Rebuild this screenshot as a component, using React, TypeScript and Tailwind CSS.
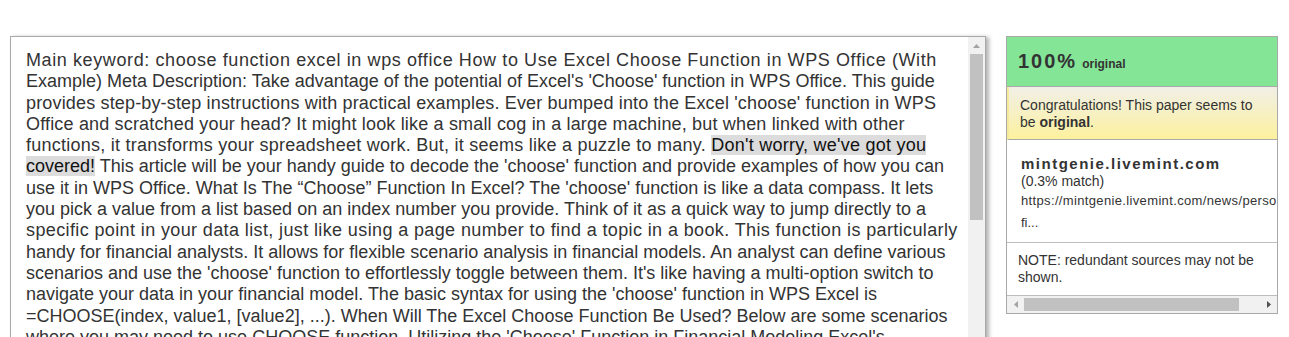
import React from 'react';

type Line = { text: React.ReactNode; cls: string };

const lines: Line[] = [
  { text: "Main keyword: choose function excel in wps office How to Use Excel Choose Function in WPS Office (With", cls: 'tracking-[0.6px]' },
  { text: "Example) Meta Description: Take advantage of the potential of Excel's 'Choose' function in WPS Office. This guide", cls: 'tracking-normal' },
  { text: "provides step-by-step instructions with practical examples. Ever bumped into the Excel 'choose' function in WPS", cls: 'tracking-[0.16px]' },
  { text: "Office and scratched your head? It might look like a small cog in a large machine, but when linked with other", cls: 'tracking-[0.17px]' },
  {
    text: (
      <>
        functions, it transforms your spreadsheet work. But, it seems like a puzzle to many.{' '}
        <span className="bg-[#dcdcdc] text-[#111]">Don't worry, we've got you</span>
      </>
    ),
    cls: 'tracking-[0.25px]',
  },
  {
    text: (
      <>
        <span className="bg-[#dcdcdc] text-[#111]">covered!</span> This article will be your handy guide to decode the
        'choose' function and provide examples of how you can
      </>
    ),
    cls: 'tracking-normal',
  },
  { text: "use it in WPS Office. What Is The \u201cChoose\u201d Function In Excel? The 'choose' function is like a data compass. It lets", cls: 'tracking-normal' },
  { text: "you pick a value from a list based on an index number you provide. Think of it as a quick way to jump directly to a", cls: 'tracking-normal' },
  { text: "specific point in your data list, just like using a page number to find a topic in a book. This function is particularly", cls: 'tracking-[0.38px]' },
  { text: "handy for financial analysts. It allows for flexible scenario analysis in financial models. An analyst can define various", cls: 'tracking-normal' },
  { text: "scenarios and use the 'choose' function to effortlessly toggle between them. It's like having a multi-option switch to", cls: 'tracking-normal' },
  { text: "navigate your data in your financial model. The basic syntax for using the 'choose' function in WPS Excel is", cls: 'tracking-normal' },
  { text: "=CHOOSE(index, value1, [value2], ...). When Will The Excel Choose Function Be Used? Below are some scenarios", cls: 'tracking-normal' },
  { text: "where you may need to use CHOOSE function. Utilizing the 'Choose' Function in Financial Modeling Excel's", cls: 'tracking-normal' },
];

const ArrowUp = () => (
  <svg width="7" height="4" viewBox="0 0 7 4">
    <path d="M0 4 L3.5 0 L7 4 Z" fill="#a3a3a3" />
  </svg>
);

export default function App() {
  return (
    <div className="w-[1289px] h-[337px] bg-white overflow-hidden font-['Liberation_Sans',Arial,sans-serif]">
      <div className="flex items-start pt-[36px] pl-[10px] gap-[20px]">
        {/* text box */}
        <div className="w-[976px] h-[330px] flex border border-[#a9a9a9] bg-white shadow-[3px_1px_4px_rgba(0,0,0,0.3)]">
          <div className="flex-1 overflow-hidden pl-[15px] pr-[4px] pt-[13px]">
            <div className="text-[18px] leading-[21.3px] text-[#333]">
              {lines.map((l, i) => (
                <div key={i} className={`whitespace-nowrap ${l.cls}`}>
                  {l.text}
                </div>
              ))}
            </div>
          </div>
          <div className="w-[17px] bg-[#f1f1f1] flex flex-col items-center">
            <div className="h-[17px] flex items-center justify-center">
              <ArrowUp />
            </div>
            <div className="w-[13px] h-[166px] bg-[#c1c1c1]" />
          </div>
        </div>

        {/* result panel */}
        <div className="w-[272px] border border-[#a9a9a9] bg-white overflow-hidden">
          <div className="h-[50px] bg-[#84e597] border-b border-[#a9a9a9] flex items-baseline pl-[11px] pt-[12px] text-[#333]">
            <span className="text-[20px] font-bold tracking-[2px] leading-[24px]">100%</span>
            <span className="text-[12px] font-bold ml-[5px]">original</span>
          </div>
          <div className="h-[53px] bg-gradient-to-b from-[#f1efe6] to-[#fdf19d] border-l-2 border-[#f6e99a] border-b border-b-[#a9a9a9] pl-[11px] pr-[10px] pt-[10px] text-[14px] leading-[17px] text-[#333]">
            Congratulations! This paper seems to be <b>original</b>.
          </div>
          <div className="h-[103px] border-b border-[#bdbdbd] pl-[14px] pt-[14px] text-[#333]">
            <div className="text-[15px] font-bold tracking-[1.5px] leading-[19px]">mintgenie.livemint.com</div>
            <div className="text-[14px] leading-[17px]">(0.3% match)</div>
            <div className="text-[13px] tracking-[0.35px] leading-[22px] whitespace-nowrap">
              https://mintgenie.livemint.com/news/personal-finance/
            </div>
            <div className="text-[13px] leading-[21px]">fi...</div>
          </div>
          <div className="h-[53px] border-b border-[#bdbdbd] pl-[11px] pt-[9px] text-[14px] leading-[17px] text-[#333]">
            NOTE: redundant sources may not be shown.
          </div>
          <div className="h-[17px] bg-[#f1f1f1] flex items-center">
            <div className="w-[17px] flex items-center justify-center">
              <svg width="4" height="7" viewBox="0 0 4 7">
                <path d="M4 0 L0 3.5 L4 7 Z" fill="#a3a3a3" />
              </svg>
            </div>
            <div className="w-[215px] h-[13px] bg-[#c1c1c1]" />
            <div className="flex-1 flex items-center justify-end pr-[6px]">
              <svg width="4" height="7" viewBox="0 0 4 7">
                <path d="M0 0 L4 3.5 L0 7 Z" fill="#505050" />
              </svg>
            </div>
          </div>
        </div>
      </div>
    </div>
  );
}
